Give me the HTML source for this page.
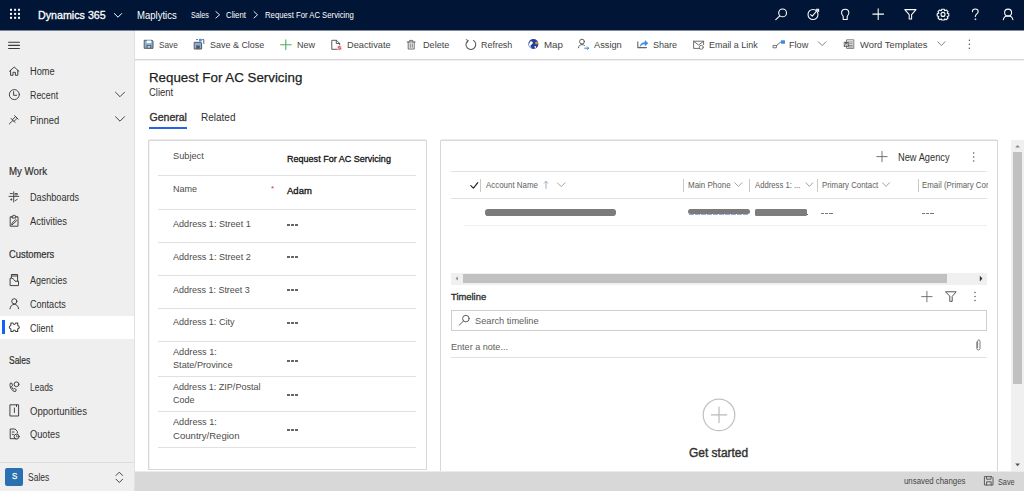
<!DOCTYPE html>
<html><head><meta charset="utf-8">
<style>
*{margin:0;padding:0;box-sizing:border-box}
html,body{width:1024px;height:491px;overflow:hidden;background:#fff;font-family:"Liberation Sans",sans-serif}
.a{position:absolute}
.t{position:absolute;white-space:nowrap;line-height:1;font-family:"Liberation Sans",sans-serif}
svg{position:absolute;overflow:visible}
.lb{left:172.9px;font-size:9.05px;color:#57534f;margin-top:0.5px}
.vb{left:286.5px;font-size:9.05px;font-weight:400;color:#111;-webkit-text-stroke:0.3px #111}
.dash{left:286.5px;width:11.4px;height:1.5px;background:repeating-linear-gradient(90deg,#666 0 3.1px,transparent 3.1px 4.1px)}
.hd{top:182.4px;font-size:8px;color:#605e5c}
.dash2{width:11.5px;height:1.3px;background:repeating-linear-gradient(90deg,#777 0 3.2px,transparent 3.2px 4.2px)}
.dv{left:158px;width:258px;height:1px;background:#e1e1e1}


.t{transform-origin:0 0}
</style></head><body>


<!-- TOP BAR -->
<div class="a" style="left:0;top:0;width:1024px;height:30px;background:#011636"></div>
<div class="a" style="left:0;top:30px;width:1024px;height:1px;background:rgba(1,22,54,0.5);z-index:5"></div>

<!-- SIDEBAR -->
<div class="a" style="left:0;top:30px;width:135px;height:461px;background:#efefef;border-right:1px solid #e1e1e1"></div>
<div class="a" style="left:0;top:316px;width:134px;height:23px;background:#fff"></div>
<div class="a" style="left:2px;top:320px;width:2.5px;height:14.4px;background:#0f62fe"></div>
<div class="a" style="left:0;top:462px;width:134px;height:1px;background:#dcdcdc"></div>
<div class="a" style="left:5px;top:468px;width:18px;height:18px;background:#2a6fb0;border-radius:2px"></div>

<!-- COMMAND BAR -->
<div class="a" style="left:135px;top:30px;width:889px;height:30px;background:#fff;border-bottom:1px solid #d4d4d4"></div>
<div class="a" style="left:135px;top:60px;width:889px;height:1px;background:#f1f1f1"></div>

<!-- TITLE -->
<div class="a" style="left:149px;top:127px;width:38px;height:2px;background:#2266e3"></div>

<!-- LEFT CARD -->
<div class="a" style="left:148px;top:140px;width:279px;height:330px;border:1px solid #d8d8d8"></div>
<div class="a" style="left:149px;top:139px;width:277px;height:1px;background:#ececec"></div>
<div class="a" style="left:149px;top:141px;width:1px;height:328px;background:#f2f2f2"></div>

<div class="a" style="left:271px;top:185px;font-size:8px;color:#d13438;line-height:1">*</div>
<div class="a dash" style="top:224px"></div>
<div class="a dash" style="top:256px"></div>
<div class="a dash" style="top:289px"></div>
<div class="a dash" style="top:322px"></div>
<div class="a dash" style="top:360px"></div>
<div class="a dash" style="top:394px"></div>
<div class="a dash" style="top:429px"></div>
<div class="a dv" style="top:175px"></div>
<div class="a dv" style="top:209px"></div>
<div class="a dv" style="top:242px"></div>
<div class="a dv" style="top:275px"></div>
<div class="a dv" style="top:308px"></div>
<div class="a dv" style="top:341px"></div>
<div class="a dv" style="top:376px"></div>
<div class="a dv" style="top:411px"></div>
<div class="a dv" style="top:447px"></div>

<!-- RIGHT CARD -->
<div class="a" style="left:440px;top:140px;width:558px;height:332px;border:1px solid #d8d8d8;border-bottom:none"></div>
<div class="a" style="left:441px;top:139px;width:556px;height:1px;background:#ececec"></div>


<!-- subgrid -->
<div class="a" style="left:451px;top:171px;width:536px;height:1px;background:#e1e1e1"></div>
<div class="a" style="left:451px;top:198px;width:536px;height:1px;background:#e1e1e1"></div>
<div class="a" style="left:464px;top:225px;width:523px;height:1px;background:#efefef"></div>
<div class="a" style="left:480px;top:178.5px;width:1px;height:13px;background:#c8c8c8"></div>
<div class="a" style="left:683px;top:178.5px;width:1px;height:13px;background:#c8c8c8"></div>
<div class="a" style="left:749px;top:178.5px;width:1px;height:13px;background:#c8c8c8"></div>
<div class="a" style="left:816.5px;top:178.5px;width:1px;height:13px;background:#c8c8c8"></div>
<div class="a" style="left:917.5px;top:178.5px;width:1px;height:13px;background:#c8c8c8"></div>
<!-- redacted row -->
<div class="a" style="left:486px;top:214.6px;width:128px;height:1.6px;background:repeating-linear-gradient(90deg,#8fb3e0 0 5px,#fff 5px 6px)"></div>
<div class="a" style="left:484.7px;top:209px;width:131px;height:6.6px;background:#7b7b7b;border-radius:3px"></div>
<div class="a" style="left:688.5px;top:213.6px;width:60px;height:1.6px;background:repeating-linear-gradient(90deg,#8fb3e0 0 5px,#fff 5px 6px)"></div>
<div class="a" style="left:687.5px;top:209px;width:62px;height:5px;background:#7b7b7b;border-radius:2.5px"></div>
<div class="a" style="left:755px;top:208.6px;width:51.5px;height:7px;background:#7d7d7d;border-radius:1.5px"></div>
<div class="a" style="left:806.6px;top:213.6px;width:1.4px;height:1.5px;background:#666"></div>
<div class="a dash2" style="left:821.4px;top:212.6px"></div>
<div class="a dash2" style="left:922px;top:212.6px"></div>
<!-- h scrollbar -->
<div class="a" style="left:450.6px;top:272.5px;width:536.4px;height:12.3px;background:#f0f0f0"></div>
<div class="a" style="left:463.4px;top:273.5px;width:483.4px;height:9.8px;background:#c1c1c1"></div>
<!-- timeline -->
<div class="a" style="left:451px;top:309.8px;width:535.6px;height:20.8px;border:1px solid #cfcfcf"></div>
<div class="a" style="left:451px;top:357px;width:536px;height:1px;background:#e1e1e1"></div>

<!-- VERTICAL SCROLLBAR -->
<div class="a" style="left:1011px;top:140px;width:13px;height:332px;background:#f0f0f0"></div>
<div class="a" style="left:1013px;top:152px;width:9px;height:232px;background:#c1c1c1"></div>

<!-- STATUS BAR -->
<div class="a" style="left:135px;top:472px;width:889px;height:19px;background:#d8d8d8"></div>
<div class="a" style="left:135px;top:471px;width:889px;height:1px;background:#ebebeb"></div>



<div class="t" style="left:37.50px;top:10px;font-size:11px;color:#fff;transform:scaleX(0.972);-webkit-text-stroke:0.3px #fff">Dynamics 365</div>
<div class="t" style="left:136.60px;top:11px;font-size:10px;color:#fff;transform:scaleX(0.953)">Maplytics</div>
<div class="t" style="left:191.00px;top:11px;font-size:8.6px;color:#fff;transform:scaleX(0.835)">Sales</div>
<div class="t" style="left:226.00px;top:11px;font-size:8.6px;color:#fff;transform:scaleX(0.908)">Client</div>
<div class="t" style="left:264.50px;top:11px;font-size:8.6px;color:#fff;transform:scaleX(0.899)">Request For AC Servicing</div>
<div class="t" style="left:29.50px;top:67px;font-size:10px;color:#323130;transform:scaleX(0.926)">Home</div>
<div class="t" style="left:29.50px;top:91px;font-size:10px;color:#323130;transform:scaleX(0.887)">Recent</div>
<div class="t" style="left:29.50px;top:116px;font-size:10px;color:#323130;transform:scaleX(0.939)">Pinned</div>
<div class="t" style="left:8.80px;top:167px;font-size:10px;color:#323130;transform:scaleX(0.969);-webkit-text-stroke:0.2px #323130">My Work</div>
<div class="t" style="left:29.50px;top:193px;font-size:10px;color:#323130;transform:scaleX(0.912)">Dashboards</div>
<div class="t" style="left:29.50px;top:217px;font-size:10px;color:#323130;transform:scaleX(0.938)">Activities</div>
<div class="t" style="left:9.00px;top:250px;font-size:10px;color:#323130;transform:scaleX(0.937);-webkit-text-stroke:0.2px #323130">Customers</div>
<div class="t" style="left:29.80px;top:276px;font-size:10px;color:#323130;transform:scaleX(0.899)">Agencies</div>
<div class="t" style="left:29.80px;top:300px;font-size:10px;color:#323130;transform:scaleX(0.905)">Contacts</div>
<div class="t" style="left:29.80px;top:324px;font-size:10px;color:#323130;transform:scaleX(0.907)">Client</div>
<div class="t" style="left:9.00px;top:356px;font-size:10px;color:#323130;transform:scaleX(0.848);-webkit-text-stroke:0.2px #323130">Sales</div>
<div class="t" style="left:29.80px;top:383px;font-size:10px;color:#323130;transform:scaleX(0.848)">Leads</div>
<div class="t" style="left:29.80px;top:407px;font-size:10px;color:#323130;transform:scaleX(0.957)">Opportunities</div>
<div class="t" style="left:29.80px;top:430px;font-size:10px;color:#323130;transform:scaleX(0.924)">Quotes</div>
<div class="t" style="left:11.80px;top:471px;font-size:9.6px;color:#fff;transform:scaleX(0.833);-webkit-text-stroke:0.25px #fff">S</div>
<div class="t" style="left:28.40px;top:473px;font-size:10px;color:#323130;transform:scaleX(0.852)">Sales</div>
<div class="t" style="left:159.10px;top:40px;font-size:9.6px;color:#444;transform:scaleX(0.859)">Save</div>
<div class="t" style="left:210.00px;top:40px;font-size:9.6px;color:#444;transform:scaleX(0.934)">Save &amp; Close</div>
<div class="t" style="left:296.70px;top:40px;font-size:9.6px;color:#444;transform:scaleX(0.945)">New</div>
<div class="t" style="left:346.70px;top:40px;font-size:9.6px;color:#444;transform:scaleX(0.962)">Deactivate</div>
<div class="t" style="left:422.70px;top:40px;font-size:9.6px;color:#444;transform:scaleX(0.953)">Delete</div>
<div class="t" style="left:481.00px;top:40px;font-size:9.6px;color:#444;transform:scaleX(0.932)">Refresh</div>
<div class="t" style="left:543.80px;top:40px;font-size:9.6px;color:#444;transform:scaleX(1.015)">Map</div>
<div class="t" style="left:594.00px;top:40px;font-size:9.6px;color:#444;transform:scaleX(0.963)">Assign</div>
<div class="t" style="left:653.00px;top:40px;font-size:9.6px;color:#444;transform:scaleX(0.942)">Share</div>
<div class="t" style="left:708.60px;top:40px;font-size:9.6px;color:#444;transform:scaleX(0.932)">Email a Link</div>
<div class="t" style="left:789.00px;top:40px;font-size:9.6px;color:#444;transform:scaleX(0.954)">Flow</div>
<div class="t" style="left:859.50px;top:40px;font-size:9.6px;color:#444;transform:scaleX(0.979)">Word Templates</div>
<div class="t" style="left:148.51px;top:71px;font-size:13.5px;color:#201f1e;transform:scaleX(0.987);-webkit-text-stroke:0.25px #201f1e">Request For AC Servicing</div>
<div class="t" style="left:148.70px;top:88px;font-size:10px;color:#323130;transform:scaleX(0.942)">Client</div>
<div class="t" style="left:149.60px;top:112px;font-size:10.5px;color:#323130;-webkit-text-stroke:0.35px #323130">General</div>
<div class="t" style="left:201.00px;top:112px;font-size:10.5px;color:#323130;transform:scaleX(0.952)">Related</div>
<div class="t" style="left:172.90px;top:151px;font-size:9.8px;color:#4f4c49;transform:scaleX(0.941)">Subject</div>
<div class="t" style="left:172.90px;top:184px;font-size:9.8px;color:#4f4c49;transform:scaleX(0.922)">Name</div>
<div class="t" style="left:172.90px;top:219px;font-size:9.8px;color:#4f4c49;transform:scaleX(0.927)">Address 1: Street 1</div>
<div class="t" style="left:172.90px;top:252px;font-size:9.8px;color:#4f4c49;transform:scaleX(0.927)">Address 1: Street 2</div>
<div class="t" style="left:172.90px;top:285px;font-size:9.8px;color:#4f4c49;transform:scaleX(0.916)">Address 1: Street 3</div>
<div class="t" style="left:172.90px;top:317px;font-size:9.8px;color:#4f4c49;transform:scaleX(0.926)">Address 1: City</div>
<div class="t" style="left:172.90px;top:347px;font-size:9.8px;color:#4f4c49;transform:scaleX(0.937)">Address 1:</div>
<div class="t" style="left:172.80px;top:360px;font-size:9.8px;color:#4f4c49;transform:scaleX(0.934)">State/Province</div>
<div class="t" style="left:172.80px;top:382px;font-size:9.8px;color:#4f4c49;transform:scaleX(0.924)">Address 1: ZIP/Postal</div>
<div class="t" style="left:172.90px;top:395px;font-size:9.8px;color:#4f4c49;transform:scaleX(0.918)">Code</div>
<div class="t" style="left:172.90px;top:417px;font-size:9.8px;color:#4f4c49;transform:scaleX(0.937)">Address 1:</div>
<div class="t" style="left:172.80px;top:431px;font-size:9.8px;color:#4f4c49;transform:scaleX(0.977)">Country/Region</div>
<div class="t" style="left:286.50px;top:154px;font-size:9.8px;color:#111;transform:scaleX(0.922);-webkit-text-stroke:0.3px #111">Request For AC Servicing</div>
<div class="t" style="left:286.50px;top:186px;font-size:9.8px;color:#111;transform:scaleX(0.971);-webkit-text-stroke:0.3px #111">Adam</div>
<div class="t" style="left:897.60px;top:153px;font-size:10px;color:#323130;transform:scaleX(0.928)">New Agency</div>
<div class="t" style="left:486.40px;top:181px;font-size:8.6px;color:#605e5c;transform:scaleX(0.921)">Account Name</div>
<div class="t" style="left:687.80px;top:181px;font-size:8.6px;color:#605e5c;transform:scaleX(0.929)">Main Phone</div>
<div class="t" style="left:755.00px;top:181px;font-size:8.6px;color:#605e5c;transform:scaleX(0.896)">Address 1: ...</div>
<div class="t" style="left:821.60px;top:181px;font-size:8.6px;color:#605e5c;transform:scaleX(0.913)">Primary Contact</div>
<div class="a" style="left:922.0px;top:0;width:65.8px;height:491px;overflow:hidden"><div class="t" style="left:0.00px;top:181px;font-size:8.6px;color:#605e5c;transform:scaleX(0.917)">Email (Primary Contact)</div></div>
<div class="t" style="left:451.40px;top:292px;font-size:9.8px;color:#323130;transform:scaleX(0.959);-webkit-text-stroke:0.35px #323130">Timeline</div>
<div class="t" style="left:474.70px;top:316px;font-size:9.6px;color:#605e5c;transform:scaleX(0.962)">Search timeline</div>
<div class="t" style="left:451.00px;top:342px;font-size:9.6px;color:#605e5c;transform:scaleX(0.945)">Enter a note...</div>
<div class="t" style="left:689.40px;top:447px;font-size:12.5px;color:#323130;transform:scaleX(0.957);-webkit-text-stroke:0.4px #323130">Get started</div>
<div class="t" style="left:903.80px;top:477px;font-size:8.6px;color:#444;transform:scaleX(0.912)">unsaved changes</div>
<div class="t" style="left:997.80px;top:478px;font-size:8.6px;color:#444;transform:scaleX(0.848)">Save</div>
<!-- ICONS OVERLAY -->
<svg width="1024" height="491" viewBox="0 0 1024 491" style="left:0;top:0" fill="none" stroke-linecap="round" stroke-linejoin="round">
 <!-- waffle -->
 <g fill="#fff">
  <rect x="10" y="8.8" width="2" height="2"/><rect x="14.1" y="8.8" width="2" height="2"/><rect x="18" y="8.8" width="2" height="2"/>
  <rect x="10" y="12.9" width="2" height="2"/><rect x="14.1" y="12.9" width="2" height="2"/><rect x="18" y="12.9" width="2" height="2"/>
  <rect x="10" y="16.8" width="2" height="2"/><rect x="14.1" y="16.8" width="2" height="2"/><rect x="18" y="16.8" width="2" height="2"/>
 </g>
 <g stroke="#fff" stroke-width="1">
  <path d="M114.3 13.5 L118 17.2 L121.7 13.5"/>
  <path d="M215.9 11.6 L219.6 14.8 L215.9 18" stroke-width="0.9"/>
  <path d="M254 11.6 L257.5 14.8 L254 18" stroke-width="0.9"/>
  <!-- search -->
  <circle cx="782.6" cy="12.9" r="3.9" stroke-width="1.1"/>
  <path d="M779.8 15.8 L775.8 19.6" stroke-width="1.1"/>
  <!-- task -->
  <circle cx="813" cy="14.5" r="5" stroke-width="1.05"/>
  <path d="M810.6 14.6 L812.3 16.2 L817.8 9.6" stroke-width="1.05"/>
  <path d="M816.2 9.2 L818.6 9.2 L818.6 11.4" stroke-width="1.1"/>
  <!-- bulb -->
  <path d="M843.2 16.4 C840.5 14.2 841 9.2 845.2 9.2 C849.4 9.2 849.9 14.2 847.2 16.4 L847.2 19.4 L843.2 19.4 Z" stroke-width="1.05"/>
  <!-- plus -->
  <path d="M878.2 8.8 V19.4 M872.8 14.1 H883.6" stroke-width="1.05"/>
  <!-- filter -->
  <path d="M904.8 9.6 H916 L911.6 14.6 V19 L909.2 19 V14.6 Z" stroke-width="1.05"/>
  <!-- gear -->
  <circle cx="943" cy="14.4" r="2" stroke-width="1.1"/>
  <path d="M941.8 9.2 L944.2 9.2 L944.7 10.8 L946.3 10 L948 11.7 L947.2 13.3 L948.8 13.8 L948.8 15.9 L947.2 16.4 L948 18 L946.3 19.7 L944.7 18.9 L944.2 20 L941.8 20 L941.3 18.9 L939.7 19.7 L938 18 L938.8 16.4 L937.2 15.9 L937.2 13.8 L938.8 13.3 L938 11.7 L939.7 10 L941.3 10.8 Z" stroke-width="1.1"/>
  <!-- help -->
  <path d="M972.4 11.8 C972.4 9.8 974 9 975.3 9 C976.8 9 978.2 10 978.2 11.7 C978.2 13.8 975.3 14 975.3 16.5" stroke-width="1.05"/>
  <circle cx="975.3" cy="19.2" r="0.5" fill="#fff" stroke-width="0.6"/>
  <!-- person -->
  <circle cx="1008.1" cy="12.6" r="3.5" stroke-width="1.05"/>
  <path d="M1003.3 19.7 C1003.6 17.3 1005.6 15.9 1008.1 15.9 C1010.6 15.9 1012.6 17.3 1012.9 19.7" stroke-width="1.05"/>
 </g>

 <!-- SIDEBAR ICONS -->
 <g stroke="#3b3a39" stroke-width="0.95">
  <path d="M8.6 42.3 H19.4 M8.6 45.4 H19.4 M8.6 48.5 H19.4" stroke-width="1.1"/>
  <!-- home -->
  <path d="M9.5 71.3 L14.2 67 L18.9 71.3 M10.6 70.3 V75.3 H13 V72.3 H15.4 V75.3 H17.8 V70.3"/>
  <!-- clock -->
  <circle cx="14.35" cy="94.6" r="5"/>
  <path d="M13.6 91.6 V95.3 H16.6"/>
  <!-- pin -->
  <path d="M9.3 124 L12.6 120.7 M11 118.4 L15 122.4 M12.4 119.8 L15.6 116.6 L17.2 118.2 L14 121.4 M14.6 115.6 L18.2 119.2"/>
  <!-- chevrons -->
  <path d="M115.5 92.2 L120 96.7 L124.5 92.2 M115.5 116.7 L120 121.2 L124.5 116.7"/>
  <!-- dashboards -->
  <path d="M13.7 191.8 V202 M9 196.4 H18.8 M10.2 193.6 H12.4 M15 193.6 H17.4 M15 194.8 H17.4 M15.2 200.6 L17.2 199.4" stroke-width="0.9"/><circle cx="11.3" cy="199.6" r="1" fill="#3b3a39" stroke="none"/>
  <!-- activities -->
  <path d="M12.2 216.8 H10.2 V226.2 H18 V216.8 H16 M12.4 218 H15.8 V216 H14.9 C14.9 214.8 13.3 214.8 13.3 216 H12.4 Z M11.8 224.6 L12.2 223 L15.6 219.6 L16.6 220.6 L13.2 224 Z"/>
  <!-- agencies -->
  <path d="M11.4 277.6 V274.5 H17.6 V281.2 M11.4 276 H17.6 M10.5 278.2 C12.8 278.2 13.6 278.6 15 281.2 H18.5 V285.6 H10.5 Z"/>
  <!-- contacts -->
  <circle cx="14.3" cy="301.3" r="2.6"/>
  <path d="M10 308.8 C10.3 306 12 304.4 14.3 304.4 C16.6 304.4 18.3 306 18.6 308.8"/>
  <!-- client puzzle -->
  <path d="M10.9 322.9 H12.9 Q14.3 326 15.7 322.9 H17.7 V325.4 Q20.9 327.2 17.7 329 V331.5 H15.7 Q14.3 328.5 12.9 331.5 H10.9 V329 Q7.7 327.2 10.9 325.4 Z" stroke-width="1.05"/>
  <!-- leads -->
  <path d="M10.2 383.5 C9 386 11.5 391.5 15.5 391.6 L16.3 389.6 L14.3 388.4 L13.4 389.4 C12.4 388.6 11.7 387.5 11.5 386.4 L12.6 385.6 L11.8 383.4 Z"/>
  <circle cx="16.5" cy="384.3" r="2.4"/>
  <!-- opportunities -->
  <path d="M10.3 404.8 H18.6 V416 H10.3 Z M14.4 408 V412.5 M16.5 404.8 V406.5"/>
  <!-- quotes -->
  <path d="M16 438.7 H10.2 V429 H15 L17.4 431.4 V433 M12.2 432 H14 M12.2 434.4 H13.4"/>
  <circle cx="16.6" cy="436.6" r="2.5"/>
  <path d="M16.6 435.4 V436.8 H17.6" stroke-width="0.7"/>
  <!-- updown -->
  <path d="M116 475.5 L119.3 472.2 L122.6 475.5 M116 479.2 L119.3 482.5 L122.6 479.2"/>
 </g>

 <!-- COMMAND BAR ICONS -->
 <g stroke-width="1">
  <!-- save -->
  <path d="M144.6 40.3 H152.2 L153 41.1 V48.3 H144.6 Z" fill="#7fb2e0" stroke="#555"/>
  <rect x="146.6" y="40.5" width="4.6" height="2.6" fill="#fff" stroke="none"/>
  <rect x="146.6" y="45" width="4.6" height="3.2" fill="#555" stroke="none"/>
  <rect x="147.6" y="45.8" width="2.6" height="2" fill="#ccc" stroke="none"/>
  <!-- save & close -->
  <path d="M194.6 42.3 H201 L201.6 42.9 V49 H194.6 Z" fill="#7fb2e0" stroke="#555"/>
  <rect x="196.2" y="45.5" width="3.6" height="3.2" fill="#555" stroke="none"/>
  <path d="M196.5 39.6 H197.6 M202.6 39.6 H203.8 V43.5" stroke="#555" stroke-width="0.9"/>
  <rect x="199" y="38.8" width="2.8" height="2.6" fill="#4a90d9" stroke="none"/>
  <!-- new plus green -->
  <path d="M285.8 39.9 V49.6 M280.6 44.75 H291.2" stroke="#4caf63" stroke-width="1.1"/>
  <!-- deactivate -->
  <path d="M338.5 47.5 V49.3 H331.8 V40.3 H336.5 L339.6 43.4 V45 M336.3 40.3 V43.5 H339.6" stroke="#555" stroke-width="0.95"/>
  <circle cx="339.6" cy="47.9" r="2.3" fill="#e0505a" stroke="#fff" stroke-width="0.6"/>
  <path d="M338.5 49 L340.7 46.8" stroke="#fff" stroke-width="0.7"/>
  <!-- delete -->
  <path d="M407.2 42 H415.2 M409.6 42 V40.4 H412.8 V42 M408.2 42 V49 H414.2 V42 M410.2 43.8 V47.4 M412.2 43.8 V47.4" stroke="#666" stroke-width="0.95"/>
  <!-- refresh -->
  <path d="M468 40.6 A4.9 4.9 0 1 0 473.4 40.4" stroke="#555" stroke-width="1.05"/>
  <path d="M466.2 39.6 L468.2 40.6 L467.2 42.6" stroke="#555" stroke-width="0.9"/>
  <!-- map globe -->
  <circle cx="533.4" cy="44" r="5" fill="#1e3f9e" stroke="none"/>
  <path d="M530.3 41.5 C531.6 40.6 533 41.8 532.8 43.2 C532.5 44.6 531 44.2 530.6 45.4 C530.2 46.6 531.3 47.6 532 48.4 C530 47.8 528.8 46 529 44 Z" fill="#fff" stroke="none"/>
  <path d="M534.4 46.2 C535.6 45.6 536.6 46.4 536 47.8 C535.4 48.2 534.5 47.8 534.4 46.2 Z" fill="#fff" stroke="none"/>
  <circle cx="536.5" cy="43.0" r="1.5" fill="#f08a24" stroke="none"/>
  <!-- assign -->
  <circle cx="582" cy="41.6" r="2.4" stroke="#555" stroke-width="0.95"/>
  <path d="M578.4 47.8 C578.8 45.6 580.2 44.6 582 44.6 C583 44.6 583.8 44.9 584.4 45.4" stroke="#555" stroke-width="0.95"/>
  <path d="M584.6 48.2 H588.6 M587.2 46.8 L588.6 48.2 L587.2 49.6" stroke="#3b8de0" stroke-width="1"/>
  <!-- share -->
  <path d="M637.8 41.8 V47.6 H646.4" stroke="#666" stroke-width="1.1"/>
  <path d="M640.2 46.2 C640.4 43.6 642.2 42.4 645 42.4 V40.6 L648 43.2 L645 45.8 V44 C643 44 641.4 44.6 640.2 46.2 Z" fill="#3b8de0" stroke="#3b8de0" stroke-width="0.5"/>
  <!-- email -->
  <path d="M699.5 48.4 H693.6 V41.2 H703.6 V44.6 M693.6 41.2 L698.6 45 L703.6 41.2" stroke="#666" stroke-width="0.95"/>
  <circle cx="701.3" cy="47.3" r="2" stroke="#666" stroke-width="0.9"/>
  <!-- flow -->
  <rect x="773.4" y="45.4" width="3" height="2.4" stroke="#666" stroke-width="0.9"/>
  <path d="M776.4 45.6 L781.2 41.6" stroke="#666" stroke-width="0.95"/>
  <rect x="781" y="40.2" width="4" height="3.6" fill="#3b8de0" stroke="none" rx="0.5"/>
  <path d="M818.4 41.8 L822.2 45.6 L826 41.8" stroke="#777" stroke-width="0.9"/>
  <!-- word templates -->
  <path d="M847 39.8 H853.8 V48.4 H847 Z M848.6 42 H852.4 M848.6 43.8 H852.4 M848.6 45.6 H852.4 M848.6 47 H852.4" stroke="#666" stroke-width="0.85"/>
  <rect x="843.8" y="41.8" width="5" height="5" fill="#555" stroke="none"/>
  <path d="M844.6 43 L845.4 46 L846.3 43.8 L847.2 46 L848 43" stroke="#fff" stroke-width="0.6"/>
  <path d="M937.8 41.8 L941.4 45.6 L945 41.8" stroke="#777" stroke-width="0.9"/>
  <!-- kebab -->
  <g fill="#555" stroke="none"><circle cx="969.4" cy="40.3" r="0.75"/><circle cx="969.4" cy="44.3" r="0.75"/><circle cx="969.4" cy="48.3" r="0.75"/></g>
 </g>

 <!-- RIGHT CARD ICONS -->
 <g stroke-width="1">
  <path d="M882 151.4 V161.8 M876.8 156.6 H887.2" stroke="#666" stroke-width="0.9"/>
  <g fill="#555" stroke="none"><circle cx="973.7" cy="153" r="0.75"/><circle cx="973.7" cy="157" r="0.75"/><circle cx="973.7" cy="161" r="0.75"/></g>
  <path d="M470.8 185.6 L473.4 188.2 L477.8 182.6" stroke="#222" stroke-width="1.15"/>
  <path d="M546 188.4 V181.4 M544.2 183.2 L546 181.4 L547.8 183.2" stroke="#8090a8" stroke-width="0.7"/>
  <path d="M557.4 182.8 L561.2 186.6 L565 182.8" stroke="#8a8a8a" stroke-width="0.8"/>
  <path d="M734.8 182.8 L738.4 186.4 L742 182.8" stroke="#8a8a8a" stroke-width="0.8"/>
  <path d="M806 182.8 L809.4 186.4 L812.8 182.8" stroke="#8a8a8a" stroke-width="0.8"/>
  <path d="M882.6 182.8 L886 186.4 L889.4 182.8" stroke="#8a8a8a" stroke-width="0.8"/>
  <!-- hscroll arrows -->
  <path d="M457.8 276.6 L455.6 278.6 L457.8 280.6 Z" fill="#8a8a8a" stroke="none"/>
  <path d="M979.8 275.8 L982.4 278.6 L979.8 281.4 Z" fill="#333" stroke="none"/>
  <!-- timeline icons -->
  <path d="M926.9 291.4 V301.8 M921.7 296.6 H932.1" stroke="#666" stroke-width="0.9"/>
  <path d="M945.8 291.8 H956.2 L952.2 296.4 V301.4 L949.8 301.4 V296.4 Z" stroke="#555" stroke-width="1"/>
  <g fill="#555" stroke="none"><circle cx="975" cy="292.6" r="0.75"/><circle cx="975" cy="296.6" r="0.75"/><circle cx="975" cy="300.6" r="0.75"/></g>
  <circle cx="465.9" cy="318.6" r="3.3" stroke="#555" stroke-width="0.95"/>
  <path d="M463.5 321 L459.2 325.2" stroke="#555" stroke-width="0.95"/>
  <!-- paperclip -->
  <path d="M976.8 342 V348.6 C976.8 350.4 980 350.4 980 348.6 V341.2 C980 339.4 977.6 339.4 977.6 341.2 V347.6" stroke="#777" stroke-width="0.95"/>
  <!-- get started circle -->
  <circle cx="719" cy="414.9" r="15.8" stroke="#c2c2c2" stroke-width="1.25"/>
  <path d="M719 407.2 V422.6 M711.3 414.9 H726.7" stroke="#bababa" stroke-width="1.2"/>
  <!-- v scrollbar arrows -->
  <path d="M1015.2 147.6 L1017.6 145 L1020 147.6 Z" fill="#888" stroke="none"/>
  <path d="M1015.2 463.6 L1017.6 466.2 L1020 463.6 Z" fill="#555" stroke="none"/>
  <!-- status save icon -->
  <path d="M984.8 476.6 H992 L993 477.6 V485 H984.8 Z M986.6 476.6 V479.2 H991 V476.6 M986.6 485 V481.8 H991.2 V485" stroke="#555" stroke-width="0.95"/>
 </g>
</svg>
</body></html>
